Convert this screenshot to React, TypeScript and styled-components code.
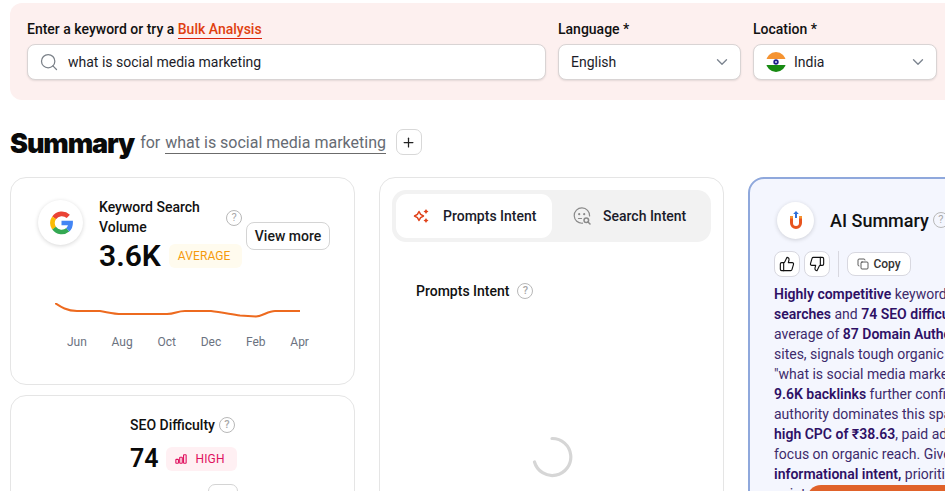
import React from "react";
import styled, { createGlobalStyle } from "styled-components";
import { Search, ChevronDown, Plus, ThumbsUp, ThumbsDown, Copy } from "lucide-react";

const Global = createGlobalStyle`
  html, body { margin: 0; padding: 0; background: #fff; overflow: hidden; }
  * { box-sizing: border-box; }
  body { font-family: Roboto, "Liberation Sans", sans-serif; color: #0a0a0a; }
`;

const Page = styled.div`
  width: 945px; height: 491px; overflow: hidden; padding: 3px 0 0 10px;
`;
const Banner = styled.section`
  width: 960px; height: 97px; background: #fdf0ef; border-radius: 12px;
  padding: 18px 0 0 17px; display: flex; gap: 12px;
`;
const Field = styled.div<{ $w: number }>`
  width: ${(p) => p.$w}px; display: flex; flex-direction: column; gap: 6px;
`;
const Label = styled.div`
  font-size: 14px; line-height: 17px; font-weight: 500; color: #111; height: 17px;
`;
const BulkLink = styled.span`
  color: #e0400f; border-bottom: 1px solid #d9230f; padding-bottom: 1px; display: inline-block; line-height: 15px;
`;
const Control = styled.div`
  height: 36px; background: #fff; border: 1px solid #d9d4d4; border-radius: 8px;
  box-shadow: 0 1px 2px rgba(0,0,0,.1); display: flex; align-items: center;
  font-size: 14px; color: #1c1c28; padding: 0 9px 0 12px;
`;
const SearchIcon = styled(Search)` margin-left: -1px; flex: none; `;
const InputText = styled.span` margin-left: 9px; `;
const Grow = styled.span<{ $ml?: number }>` flex: 1; margin-left: ${(p) => p.$ml ?? 0}px; `;

const Heading = styled.div`
  display: flex; align-items: center; height: 40px; margin-top: 22px;
`;
const Title = styled.h1`
  margin: 4px 0 0; font-family: Inter, sans-serif; font-weight: 900; font-size: 27px; letter-spacing: -1.1px; color: #0a0a0a;
  line-height: 40px;
`;
const ForText = styled.span`
  margin-left: 6px; font-size: 16px; color: #666b73;
`;
const KeywordLink = styled.span`
  color: #666b73; border-bottom: 1px solid #6b6b6b; padding-bottom: 1px; margin-left: 1px;
`;
const PlusBtn = styled.button`
  margin-left: 10px; width: 26px; height: 26px; background: #fff; border: 1px solid #d8d8d8; border-radius: 7px;
  display: flex; align-items: center; justify-content: center; padding: 0; color: #222;
`;
const Columns = styled.div`
  display: flex; gap: 24px; margin-top: 15px; align-items: flex-start;
`;
const LeftCol = styled.div`
  width: 345px; display: flex; flex-direction: column; gap: 10px; flex: none;
`;
const Card = styled.div<{ $h: number }>`
  width: 345px; height: ${(p) => p.$h}px; background: #fff; border: 1px solid #e5e5e5; border-radius: 16px; flex: none; position: relative;
`;
const VolumeCard = styled(Card)`
  padding: 22px 24px 0 27px;
`;
const VolumeTop = styled.div` display: flex; align-items: flex-start; `;
const LogoCircle = styled.div<{ $s: number }>`
  width: ${(p) => p.$s}px; height: ${(p) => p.$s}px; border-radius: 50%; background: #fff; flex: none;
  box-shadow: 0 1px 4px rgba(0,0,0,.16); display: flex; align-items: center; justify-content: center;
`;
const VolumeInfo = styled.div` margin: -3px 0 0 16px; width: 147px; `;
const VolumeTitleRow = styled.div` display: flex; align-items: center; `;
const CardTitle = styled.div`
  font-size: 14px; line-height: 20px; font-weight: 500; color: #111; width: 126px;
`;
const Help = styled.span<{ $ml?: number; $mt?: number }>`
  width: 16px; height: 16px; border: 1px solid #b8b8b8; border-radius: 50%; color: #a8a8a8; font-size: 11px; line-height: 14px;
  text-align: center; flex: none; margin-left: ${(p) => p.$ml ?? 0}px; margin-top: ${(p) => p.$mt ?? 0}px; display: inline-block;
`;
const MetricRow = styled.div` display: flex; align-items: center; margin-top: 2px; gap: 8px;`;
const BigNum = styled.div<{ $fs: number }>`
  font-size: ${(p) => p.$fs}px; font-weight: 600; color: #0a0a0a; line-height: 34px; white-space: nowrap;
`;
const Badge = styled.span<{ $bg: string; $fg: string }>`
  background: ${(p) => p.$bg}; color: ${(p) => p.$fg}; font-size: 12px; height: 24px; border-radius: 6px;
  display: inline-flex; align-items: center; padding: 0 12px 0 9px; gap: 9px; white-space: nowrap; flex: none; letter-spacing: .1px;
`;
const ViewMore = styled.button`
  margin: 22px 0 0 0; width: 84px; height: 28px; background: #fff; border: 1px solid #d4d4d4; border-radius: 8px;
  font: 500 14px Roboto, sans-serif; color: #1a1a1a; padding: 0; flex: none; white-space: nowrap;
`;
const Chart = styled.svg` display: block; margin: 30px 0 0 17px; `;
const Months = styled.div`
  display: flex; justify-content: space-between; margin: 12px 0 0 29px; width: 242px; font-size: 12px; line-height: 14px; color: #6b7280;
`;
const DiffCard = styled(Card)`
  display: flex; flex-direction: column; padding: 19px 0 0 119px;
`;
const DiffTitle = styled.div`
  display: flex; align-items: center; gap: 4px; font-size: 14px; line-height: 20px; font-weight: 500; color: #111;
`;
const DiffMetric = styled.div` display: flex; align-items: center; gap: 7px; margin-top: 7px; height: 34px; `;
const PeekBtn = styled.div`
  position: absolute; left: 197px; top: 88px; width: 30px; height: 24px; border: 1px solid #d4d4d4; border-radius: 7px; background: #fff;
`;
const IntentCard = styled(Card)` padding: 12px 12px 0; `;
const Tabs = styled.div`
  width: 319px; height: 52px; background: #f2f2f2; border-radius: 14px; padding: 4px; display: flex;
`;
const Tab = styled.div<{ $active?: boolean; $w: number; $pl: number }>`
  width: ${(p) => p.$w}px; height: 44px; border-radius: 11px; background: ${(p) => (p.$active ? "#fff" : "transparent")};
  display: flex; align-items: center; padding-left: ${(p) => p.$pl}px; gap: 12px;
  font-size: 14px; font-weight: 500; color: #1b1b2a; white-space: nowrap;
`;
const IntentHead = styled.div`
  display: flex; align-items: center; gap: 8px; margin: 39px 0 0 24px; font-size: 14px; line-height: 20px; font-weight: 500; color: #111;
`;
const SpinnerWrap = styled.div` display: flex; justify-content: center; margin-top: 135px; `;
const SummaryCard = styled.div`
  width: 300px; height: 400px; flex: none; background: #f4f6fe; border: 2px solid #8fa8dc; border-radius: 16px; padding: 22px 0 0 24px; position: relative;
`;
const SummaryHead = styled.div` display: flex; align-items: center; margin-left: 3px; height: 38px; `;
const SummaryTitle = styled.div`
  font-size: 18px; font-weight: 500; margin-left: 16px; color: #111; white-space: nowrap;
`;
const Actions = styled.div` display: flex; align-items: center; gap: 4px; margin-top: 12px; height: 26px; `;
const IconBtn = styled.button`
  width: 26px; height: 26px; border: 1px solid #d8d8e0; border-radius: 8px; background: #fff; padding: 0;
  display: flex; align-items: center; justify-content: center; color: #111;
`;
const Divider = styled.div` width: 1px; height: 26px; background: #d8d8e0; margin: 0 4px 0 4px; `;
const CopyBtn = styled.button`
  width: 64px; height: 24px; border: 1px solid #d8d8e0; border-radius: 8px; background: #fff; padding: 0;
  display: flex; align-items: center; justify-content: center; gap: 4px; font: 500 12px Roboto, sans-serif; color: #333;
`;
const Para = styled.p`
  margin: 7px 0 0; font-size: 14px; line-height: 20px; color: #3d2a6b; white-space: nowrap;
  b { font-weight: 600; color: #2e1065; }
`;
const Floating = styled.div`
  position: absolute; left: 57px; top: 306px; width: 230px; height: 40px; border-radius: 14px; background: #e0622a;
`;

const GoogleG = () => (
  <svg width="26" height="26" viewBox="0 0 26 26" fill="none" strokeWidth="4.600">
    <path d="M6.100 7.800A9.500 9.500 0 0 1 20.300 6.400" stroke="#ea4335" />
    <path d="M6.100 7.800A9.500 9.500 0 0 0 6.100 18.200" stroke="#fbbc05" />
    <path d="M6.100 18.200A9.500 9.500 0 0 0 19.800 19.800" stroke="#34a853" />
    <path d="M19.800 19.800A9.500 9.500 0 0 0 22.600 13H13.500" stroke="#4285f4" />
  </svg>
);

const IndiaFlag = () => (
  <svg width="20" height="20" viewBox="0 0 20 20">
    <defs><clipPath id="fc"><circle cx="10" cy="10" r="10" /></clipPath></defs>
    <g clipPath="url(#fc)">
      <rect width="20" height="7" fill="#f59331" />
      <rect y="7" width="20" height="6" fill="#fff" />
      <rect y="13" width="20" height="7" fill="#178a12" />
      <circle cx="10" cy="10" r="2.700" fill="#1d1d8a" />
      <circle cx="10" cy="10" r="1" fill="#d8d8f0" />
    </g>
  </svg>
);

const Sparkles = () => (
  <svg width="19" height="18" viewBox="0 0 19 18" fill="none">
    <path d="M7 4.500 L8.600 7.400 L11.500 9 L8.600 10.600 L7 13.500 L5.400 10.600 L2.500 9 L5.400 7.400 Z" stroke="#e0421a" strokeWidth="1.500" strokeLinejoin="round" />
    <path d="M14 2 L14.900 3.600 L16.500 4.500 L14.900 5.400 L14 7 L13.100 5.400 L11.500 4.500 L13.100 3.600 Z" fill="#e0421a" />
    <path d="M14 11 L14.900 12.600 L16.500 13.500 L14.900 14.400 L14 16 L13.100 14.400 L11.500 13.500 L13.100 12.600 Z" fill="#e0421a" />
  </svg>
);

const FaceSearch = () => (
  <svg width="18" height="18" viewBox="0 0 18 18" fill="none" stroke="#8a8a8a" strokeWidth="1.200" strokeLinecap="round">
    <path d="M9.500 16.200A7.700 7.700 0 1 1 16.600 9" />
    <circle cx="6.200" cy="7.200" r=".5" fill="#8a8a8a" />
    <circle cx="11.200" cy="7.200" r=".5" fill="#8a8a8a" />
    <path d="M5.500 11.500h3" />
    <circle cx="13.300" cy="13.300" r="2.300" strokeWidth="1.500" />
    <path d="M15 15l2 2" strokeWidth="1.500" />
  </svg>
);

const UberLogo = () => (
  <svg width="14" height="18" viewBox="0 0 14 18" fill="none">
    <path d="M7 0 L9.800 3 L8 3 L8 7 L6 7 L6 3 L4.200 3 Z" fill="#2f6fd8" />
    <path d="M2.500 6v6a4.500 4.500 0 0 0 9 0V6" stroke="#e8541e" strokeWidth="3" />
    <rect x="1" y="5" width="3" height="2.500" fill="#f59331" />
    <rect x="10" y="5" width="3" height="2.500" fill="#f59331" />
  </svg>
);

const HighBars = () => (
  <svg width="12" height="12" viewBox="0 0 14 12" fill="none" stroke="#e0115f" strokeWidth="1.300">
    <rect x="1" y="6.500" width="3" height="4.500" rx=".6" />
    <rect x="5.500" y="4" width="3" height="7" rx=".6" />
    <rect x="10" y="1" width="3" height="10" rx=".6" />
  </svg>
);

const months = ["Jun", "Aug", "Oct", "Dec", "Feb", "Apr"];

export default function App() {
  return (
    <Page>
      <Global />
      <Banner>
        <Field $w={519}>
          <Label>Enter a keyword or try a <BulkLink>Bulk Analysis</BulkLink></Label>
          <Control>
            <SearchIcon size={20} color="#7a8088" strokeWidth={1.5} />
            <InputText>what is social media marketing</InputText>
          </Control>
        </Field>
        <Field $w={183}>
          <Label>Language *</Label>
          <Control>
            <Grow>English</Grow>
            <ChevronDown size={18} color="#7d8590" strokeWidth={1.8} />
          </Control>
        </Field>
        <Field $w={184}>
          <Label>Location *</Label>
          <Control>
            <IndiaFlag />
            <Grow $ml={8}>India</Grow>
            <ChevronDown size={18} color="#7d8590" strokeWidth={1.8} />
          </Control>
        </Field>
      </Banner>

      <Heading>
        <Title>Summary</Title>
        <ForText>for <KeywordLink>what is social media marketing</KeywordLink></ForText>
        <PlusBtn><Plus size={15} strokeWidth={2} /></PlusBtn>
      </Heading>

      <Columns>
        <LeftCol>
          <VolumeCard $h={208}>
            <VolumeTop>
              <LogoCircle $s={45}><GoogleG /></LogoCircle>
              <VolumeInfo>
                <VolumeTitleRow>
                  <CardTitle>Keyword Search Volume</CardTitle>
                  <Help $ml={1} $mt={2}>?</Help>
                </VolumeTitleRow>
                <MetricRow>
                  <BigNum $fs={30}>3.6K</BigNum>
                  <Badge $bg="#fffbee" $fg="#f59a0c">AVERAGE</Badge>
                </MetricRow>
              </VolumeInfo>
              <ViewMore>View more</ViewMore>
            </VolumeTop>
            <Chart width="250" height="20" viewBox="0 0 250 20" fill="none">
              <path
                d="M0 0 C6 4 12 8 22 8 L45 8 C52 9 58 11 67 11 L112 11 C120 11 122 8 130 8 L156 8 C165 9 175 11 185 12.500 L201 13.500 C208 13 213 8 220 8 L245 8"
                stroke="#ed6a1f" strokeWidth="2"
              />
            </Chart>
            <Months>{months.map((m) => <span key={m}>{m}</span>)}</Months>
          </VolumeCard>
          <DiffCard $h={120}>
            <DiffTitle>SEO Difficulty <Help>?</Help></DiffTitle>
            <DiffMetric>
              <BigNum $fs={25}>74</BigNum>
              <Badge $bg="#fff0f3" $fg="#e0115f"><HighBars />HIGH</Badge>
            </DiffMetric>
            <PeekBtn />
          </DiffCard>
        </LeftCol>

        <IntentCard $h={330}>
          <Tabs>
            <Tab $active $w={156} $pl={16}><Sparkles />Prompts Intent</Tab>
            <Tab $w={155} $pl={21}><FaceSearch />Search Intent</Tab>
          </Tabs>
          <IntentHead>Prompts Intent <Help>?</Help></IntentHead>
          <SpinnerWrap>
            <svg width="42" height="42" viewBox="0 0 42 42" fill="none">
              <path d="M21 2.500 A18.500 18.500 0 1 1 3.500 26" stroke="#d6d6d6" strokeWidth="3.200" strokeLinecap="round" />
            </svg>
          </SpinnerWrap>
        </IntentCard>

        <SummaryCard>
          <SummaryHead>
            <LogoCircle $s={37}><UberLogo /></LogoCircle>
            <SummaryTitle>AI Summary</SummaryTitle>
            <Help $ml={4}>?</Help>
          </SummaryHead>
          <Actions>
            <IconBtn><ThumbsUp size={16} strokeWidth={1.7} /></IconBtn>
            <IconBtn><ThumbsDown size={16} strokeWidth={1.7} /></IconBtn>
            <Divider />
            <CopyBtn><Copy size={12} strokeWidth={1.6} />Copy</CopyBtn>
          </Actions>
          <Para>
            <b>Highly competitive</b> keyword with <b>3.6K</b><br />
            <b>searches</b> and <b>74 SEO difficulty</b><br />
            average of <b>87 Domain Authority</b><br />
            sites, signals tough organic<br />
            "what is social media marketing"<br />
            <b>9.6K backlinks</b> further confirm<br />
            authority dominates this space<br />
            <b>high CPC of ₹38.63</b>, paid ads<br />
            focus on organic reach. Given<br />
            <b>informational intent,</b> prioritize<br />
            point
          </Para>
          <Floating />
        </SummaryCard>
      </Columns>
    </Page>
  );
}
